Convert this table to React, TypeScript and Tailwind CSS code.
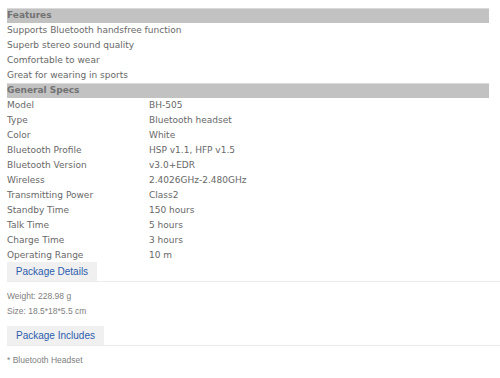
import React from "react";

const features = [
  "Supports Bluetooth handsfree function",
  "Superb stereo sound quality",
  "Comfortable to wear",
  "Great for wearing in sports",
];

const specs: [string, string][] = [
  ["Model", "BH-505"],
  ["Type", "Bluetooth headset"],
  ["Color", "White"],
  ["Bluetooth Profile", "HSP v1.1, HFP v1.5"],
  ["Bluetooth Version", "v3.0+EDR"],
  ["Wireless", "2.4026GHz-2.480GHz"],
  ["Transmitting Power", "Class2"],
  ["Standby Time", "150 hours"],
  ["Talk Time", "5 hours"],
  ["Charge Time", "3 hours"],
  ["Operating Range", "10 m"],
];

function SectionBar({ title }: { title: string }) {
  return (
    <div className="h-[15px] bg-[#c2c2c2] border-t border-[#dadada] flex items-center font-bold text-[#727272]">
      {title}
    </div>
  );
}

function TabHeader({ label, width }: { label: string; width: string }) {
  return (
    <div className="border-b border-[#ececec] flex">
      <div
        className={`${width} h-[19px] bg-[#f0f0f0] flex items-center justify-center text-[10px] text-[#2c5cad] font-['Liberation_Sans',Arial,sans-serif]`}
      >
        {label}
      </div>
    </div>
  );
}

export default function App() {
  return (
    <div className="w-[500px] h-[378px] bg-white overflow-hidden pt-[8px] font-['DejaVu_Sans',Verdana,sans-serif] text-[9px] text-[#686868]">
      <div className="pl-[7px] pr-[11px]">
        <SectionBar title="Features" />
        {features.map((f) => (
          <div key={f} className="h-[15px] flex items-center">
            {f}
          </div>
        ))}
        <SectionBar title="General Specs" />
        {specs.map(([k, v]) => (
          <div key={k} className="h-[15px] flex items-center">
            <div className="w-[142px]">{k}</div>
            <div>{v}</div>
          </div>
        ))}
      </div>
      <div className="pl-[7px] -mt-px">
        <TabHeader label="Package Details" width="w-[90px]" />
        <div className="pt-[7px] pb-[7px] text-[8.5px] text-[#808080] font-['Liberation_Sans',Arial,sans-serif]">
          <div className="h-[15px] flex items-center">Weight: 228.98 g</div>
          <div className="h-[15px] flex items-center">Size: 18.5*18*5.5 cm</div>
        </div>
        <TabHeader label="Package Includes" width="w-[97px]" />
        <div className="pt-[7px] text-[8.5px] text-[#808080] font-['Liberation_Sans',Arial,sans-serif]">
          <div className="h-[15px] flex items-center">* Bluetooth Headset</div>
        </div>
      </div>
    </div>
  );
}
